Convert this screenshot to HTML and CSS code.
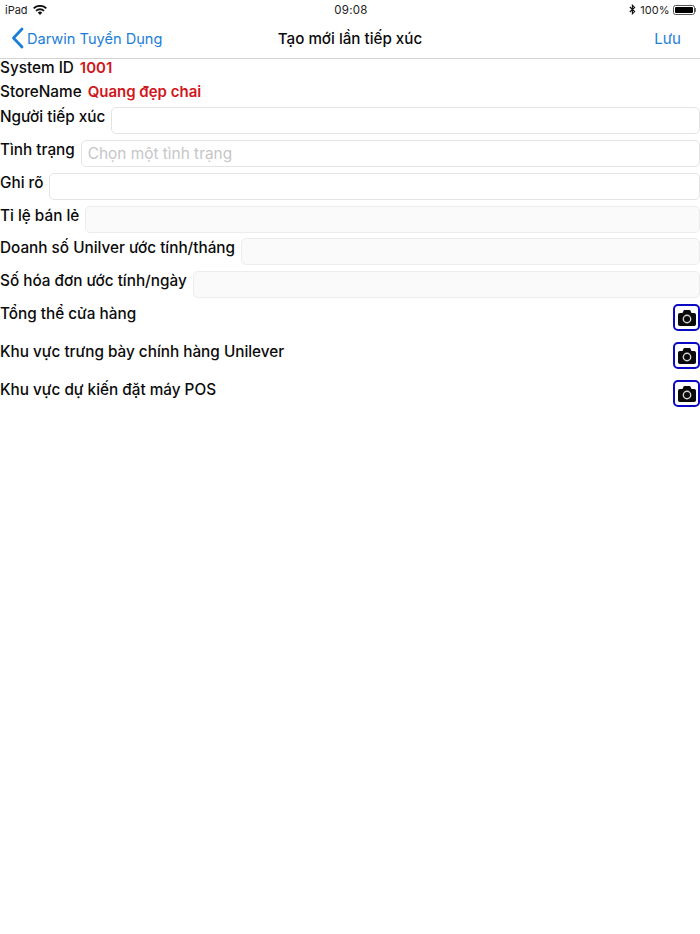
FILE: index.html
```html
<!DOCTYPE html>
<html lang="vi">
<head>
<meta charset="utf-8">
<title>Tạo mới lần tiếp xúc</title>
<link rel="stylesheet" href="styles.css">
</head>
<body>
<div class="status">
  <div class="status-left">
    <span>iPad</span>
    <svg class="wifi" viewBox="0 0 14 10" width="14" height="10"><path d="M7 10 4.700 7.600a3.300 3.300 0 0 1 4.600 0zM3.600 6.500 2.400 5.200a6.600 6.600 0 0 1 9.200 0l-1.200 1.300a4.900 4.900 0 0 0-6.800 0zM1.300 4.100 0 2.800a10 10 0 0 1 14 0l-1.300 1.300a8.200 8.200 0 0 0-11.400 0z" fill="#111"/></svg>
  </div>
  <div class="status-time">09:08</div>
  <div class="status-right">
    <svg class="bt" viewBox="0 0 7 11" width="7" height="11"><path d="M.8 3 5.600 7.600 3.400 9.800V1.200l2.200 2.200L.8 8" fill="none" stroke="#111" stroke-width="1.100"/></svg>
    <span>100%</span>
    <span class="battery"><span class="battery-fill"></span></span><span class="battery-cap"></span>
  </div>
</div>
<header class="nav">
  <a class="back">
    <svg viewBox="0 0 13 22" width="13" height="22"><path d="M11 2 2.500 11 11 20" fill="none" stroke="#1c7ed6" stroke-width="2.800" stroke-linecap="round" stroke-linejoin="round"/></svg>
    <span class="back-text">Darwin Tuyển Dụng</span>
  </a>
  <h1 class="nav-title">Tạo mới lần tiếp xúc</h1>
  <a class="save">Lưu</a>
</header>
<main class="form">
  <div class="info"><span class="label">System ID</span><span class="value">1001</span></div>
  <div class="info"><span class="label">StoreName</span><span class="value">Quang đẹp chai</span></div>
  <div class="fields">
    <div class="row"><span class="label">Người tiếp xúc</span><div class="input"></div></div>
    <div class="row"><span class="label">Tình trạng</span><div class="input placeholder">Chọn một tình trạng</div></div>
    <div class="row"><span class="label">Ghi rõ</span><div class="input"></div></div>
    <div class="row"><span class="label">Tỉ lệ bán lẻ</span><div class="input disabled"></div></div>
    <div class="row"><span class="label">Doanh số Unilver ước tính/tháng</span><div class="input disabled"></div></div>
    <div class="row"><span class="label">Số hóa đơn ước tính/ngày</span><div class="input disabled"></div></div>
  </div>
  <div class="photos">
    <div class="photo-row"><span class="label">Tổng thể cửa hàng</span><button class="cam"><svg viewBox="0 0 18 16" width="18" height="16"><path d="M1.800 3h2.700l1.100-2.400q.2-.5.800-.5h5.200q.6 0 .8.5L13.500 3h2.700A1.800 1.800 0 0 1 18 4.800V14.200A1.800 1.800 0 0 1 16.200 16H1.800A1.800 1.800 0 0 1 0 14.200V4.800A1.800 1.800 0 0 1 1.800 3z" fill="#0a0a0a"/><circle cx="9" cy="9" r="3.700" fill="none" stroke="#d4d4d4" stroke-width="1.400"/></svg></button></div>
    <div class="photo-row"><span class="label">Khu vực trưng bày chính hàng Unilever</span><button class="cam"><svg viewBox="0 0 18 16" width="18" height="16"><path d="M1.800 3h2.700l1.100-2.400q.2-.5.800-.5h5.200q.6 0 .8.5L13.500 3h2.700A1.800 1.800 0 0 1 18 4.800V14.200A1.800 1.800 0 0 1 16.200 16H1.800A1.800 1.800 0 0 1 0 14.200V4.800A1.800 1.800 0 0 1 1.800 3z" fill="#0a0a0a"/><circle cx="9" cy="9" r="3.700" fill="none" stroke="#d4d4d4" stroke-width="1.400"/></svg></button></div>
    <div class="photo-row"><span class="label">Khu vực dự kiến đặt máy POS</span><button class="cam"><svg viewBox="0 0 18 16" width="18" height="16"><path d="M1.800 3h2.700l1.100-2.400q.2-.5.800-.5h5.200q.6 0 .8.5L13.500 3h2.700A1.800 1.800 0 0 1 18 4.800V14.200A1.800 1.800 0 0 1 16.200 16H1.800A1.800 1.800 0 0 1 0 14.200V4.800A1.800 1.800 0 0 1 1.800 3z" fill="#0a0a0a"/><circle cx="9" cy="9" r="3.700" fill="none" stroke="#d4d4d4" stroke-width="1.400"/></svg></button></div>
  </div>
</main>
</body>
</html>
```
FILE: styles.css
```css
* { box-sizing: border-box; }
html, body { margin: 0; padding: 0; }
body {
  width: 700px;
  height: 934px;
  background: #fff;
  color: #0b0b0b;
  font-family: Inter, "Noto Sans", sans-serif;
  overflow: hidden;
}
.status {
  height: 18px;
  display: flex;
  align-items: center;
  justify-content: space-between;
  padding: 1px 4px 0 5px;
  font-size: 11px;
  color: #222;
  position: relative;
}
.status-left, .status-right { display: flex; align-items: center; }
.wifi { margin-left: 5px; }
.status-time {
  position: absolute;
  left: 2px;
  right: 0;
  top: 3px;
  text-align: center;
  font-size: 11.500px;
  letter-spacing: 0.300px;
  pointer-events: none;
}
.bt { margin-right: 4px; }
.battery {
  width: 22px;
  height: 10px;
  margin-left: 3px;
  border: 1px solid #555;
  border-radius: 2.500px;
  padding: 1px;
  display: flex;
}
.battery-fill { flex: 1; background: #000; border-radius: 1px; }
.battery-cap { width: 1.500px; height: 4px; background: #777; }
.nav {
  height: 41px;
  border-bottom: 1px solid #d2d2d2;
  display: flex;
  align-items: center;
  justify-content: space-between;
  padding: 0 19px 0 11px;
  position: relative;
}
.back {
  display: flex;
  align-items: center;
  gap: 3px;
  color: #1c7ed6;
  font-size: 14.600px;
}
.back-text { padding-top: 2px; }
.nav-title {
  margin: 0;
  position: absolute;
  left: 0;
  right: 0;
  text-align: center;
  font-size: 15.200px;
  font-weight: 500;
  pointer-events: none;
}
.save { color: #1c7ed6; font-size: 15px; padding-top: 1px; }
.form { display: flex; flex-direction: column; margin-top: -3px; }
.label { font-size: 15.300px; font-weight: 500; white-space: nowrap; }
.info { height: 24px; display: flex; align-items: center; gap: 6px; padding-bottom: 2px; }
.value { color: #d0171b; font-size: 15px; font-weight: 600; }
.fields { display: flex; flex-direction: column; gap: 5.850px; margin-top: 3px; }
.row { display: flex; align-items: flex-start; gap: 6px; height: 27px; }
.row .label { line-height: 20px; }
.input {
  flex: 1;
  height: 27px;
  background: #fff;
  border: 1px solid #e4e4e4;
  border-radius: 5px;
  font-size: 15.400px;
  line-height: 25px;
  padding-left: 6px;
}
.placeholder { color: #c6c6c8; }
.disabled { background: #fafafa; border-color: #ececec; }
.photos { display: flex; flex-direction: column; gap: 11px; margin-top: 6px; }
.photo-row { display: flex; justify-content: space-between; align-items: flex-start; height: 27px; }
.photo-row .label { line-height: 20px; }
.cam {
  width: 27px;
  height: 27px;
  padding: 0;
  background: #fff;
  border: 2px solid #0a0ac4;
  border-radius: 5px;
  display: flex;
  align-items: center;
  justify-content: center;
}
```
